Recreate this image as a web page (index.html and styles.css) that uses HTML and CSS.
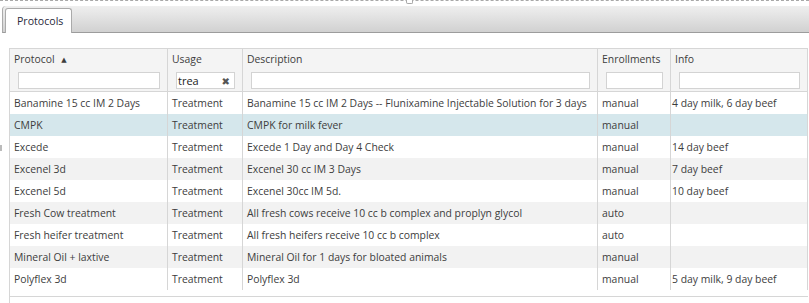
FILE: index.html
```html
<!DOCTYPE html>
<html>
<head>
<meta charset="utf-8">
<link rel="stylesheet" href="styles.css">
</head>
<body>
<div class="frame">
  <div class="handle"></div>
  <div class="edge-mark"></div>
  <div class="tabbar"><div class="tab">Protocols</div></div>
  <div class="grid-wrap">
    <table class="grid">
      <colgroup>
        <col class="c-protocol"><col class="c-usage"><col class="c-desc"><col class="c-enroll"><col class="c-info">
      </colgroup>
      <thead>
        <tr class="titles">
          <th>Protocol <span class="sort">&#9650;</span></th>
          <th>Usage</th>
          <th>Description</th>
          <th>Enrollments</th>
          <th>Info</th>
        </tr>
        <tr class="filters">
          <th><span class="filter"></span></th>
          <th><span class="filter">trea<span class="clear">&#10006;</span></span></th>
          <th><span class="filter"></span></th>
          <th><span class="filter"></span></th>
          <th><span class="filter"></span></th>
        </tr>
      </thead>
      <tbody>
        <tr><td>Banamine 15 cc IM 2 Days</td><td>Treatment</td><td>Banamine 15 cc IM 2 Days -- Flunixamine Injectable Solution for 3 days</td><td>manual</td><td class="info">4 day milk, 6 day beef</td></tr>
        <tr class="selected"><td>CMPK</td><td>Treatment</td><td>CMPK for milk fever</td><td>manual</td><td class="info"></td></tr>
        <tr><td>Excede</td><td>Treatment</td><td>Excede 1 Day and Day 4 Check</td><td>manual</td><td class="info">14 day beef</td></tr>
        <tr><td>Excenel 3d</td><td>Treatment</td><td>Excenel 30 cc IM 3 Days</td><td>manual</td><td class="info">7 day beef</td></tr>
        <tr><td>Excenel 5d</td><td>Treatment</td><td>Excenel 30cc IM 5d.</td><td>manual</td><td class="info">10 day beef</td></tr>
        <tr><td>Fresh Cow treatment</td><td>Treatment</td><td>All fresh cows receive 10 cc b complex and proplyn glycol</td><td>auto</td><td class="info"></td></tr>
        <tr><td>Fresh heifer treatment</td><td>Treatment</td><td>All fresh heifers receive 10 cc b complex</td><td>auto</td><td class="info"></td></tr>
        <tr><td>Mineral Oil + laxtive</td><td>Treatment</td><td>Mineral Oil for 1 days for bloated animals</td><td>manual</td><td class="info"></td></tr>
        <tr><td>Polyflex 3d</td><td>Treatment</td><td>Polyflex 3d</td><td>manual</td><td class="info">5 day milk, 9 day beef</td></tr>
      </tbody>
    </table>
    <div class="grid-foot"></div>
  </div>
</div>
</body>
</html>
```
FILE: styles.css
```css
html, body {
  margin: 0;
  background: #fff;
  overflow: hidden;
}
body {
  font-family: "Open Sans", "DejaVu Sans", sans-serif;
  font-size: 10.4px;
  color: #3d3d3d;
}
.frame {
  position: relative;
  border-top: 1px dashed #a8a8a8;
  padding-top: 5px;
}
.handle {
  position: absolute;
  left: 406px;
  top: -1px;
  width: 5px;
  height: 3px;
  background: #fff;
  border: 1px solid #a8a8a8;
  border-top: none;
  border-radius: 0 0 2px 2px;
}
.edge-mark {
  position: absolute;
  left: 0;
  top: 144px;
  width: 2px;
  height: 6px;
  background: #bbb;
}
.tabbar {
  display: flex;
  align-items: flex-end;
  height: 26px;
  margin-left: 2px;
  padding-left: 2px;
  background: linear-gradient(#efefef, #d1d1d1);
  border-left: 1px solid #aaa;
  border-bottom: 1px solid #9c9c9c;
  border-top-left-radius: 4px;
}
.tab {
  box-sizing: border-box;
  width: 67px;
  height: 25px;
  margin-bottom: -1px;
  padding: 5px 0 0 11px;
  background: #fff;
  border: 1px solid #aaa;
  border-bottom: none;
  border-radius: 3px 3px 0 0;
  color: #2a2a3a;
  font-size: 10.6px;
}
.grid-wrap {
  margin: 15px 0 0 9px;
  width: 798px;
  border-left: 1px solid #d6d6d6;
}
.grid {
  border-collapse: collapse;
  table-layout: fixed;
  width: 798px;
  margin-left: -1px;
}
.c-protocol { width: 158px; }
.c-usage { width: 75px; }
.c-desc { width: 355px; }
.c-enroll { width: 73px; }
.c-info { width: 137px; }
.grid th {
  background: #f4f4f4;
  font-weight: normal;
  text-align: left;
  border-left: 1px solid #d6d6d6;
  border-right: 1px solid #d6d6d6;
  white-space: nowrap;
}
.titles th {
  height: 20px;
  padding: 0 4px;
  border-top: 1px solid #d6d6d6;
  vertical-align: middle;
}
.sort {
  font-size: 7px;
  margin-left: 4px;
  vertical-align: 1px;
}
.filters th {
  height: 19px;
  padding: 3px 7px 0 8px;
  border-bottom: 1px solid #d6d6d6;
  vertical-align: top;
}
.filter {
  box-sizing: border-box;
  display: flex;
  justify-content: space-between;
  align-items: center;
  height: 17px;
  padding: 0 4px 0 1px;
  background: #fff;
  border: 1px solid #d3d3d3;
  font-size: 11px;
  color: #222;
}
.clear {
  font-size: 10px;
  font-weight: bold;
  color: #555;
}
.grid td {
  height: 22px;
  padding: 0 4px;
  border-left: 1px solid #d6d6d6;
  border-right: 1px solid #d6d6d6;
  white-space: nowrap;
  overflow: hidden;
  vertical-align: middle;
}
.grid td.info { padding-left: 1px; }
.grid tbody tr:nth-child(even) td { background: #f2f2f2; }
.grid tbody tr.selected td { background: #d5e7ec; }
.grid-foot {
  height: 20px;
  margin-top: 6px;
  border-top: 1px solid #d6d6d6;
}
```
